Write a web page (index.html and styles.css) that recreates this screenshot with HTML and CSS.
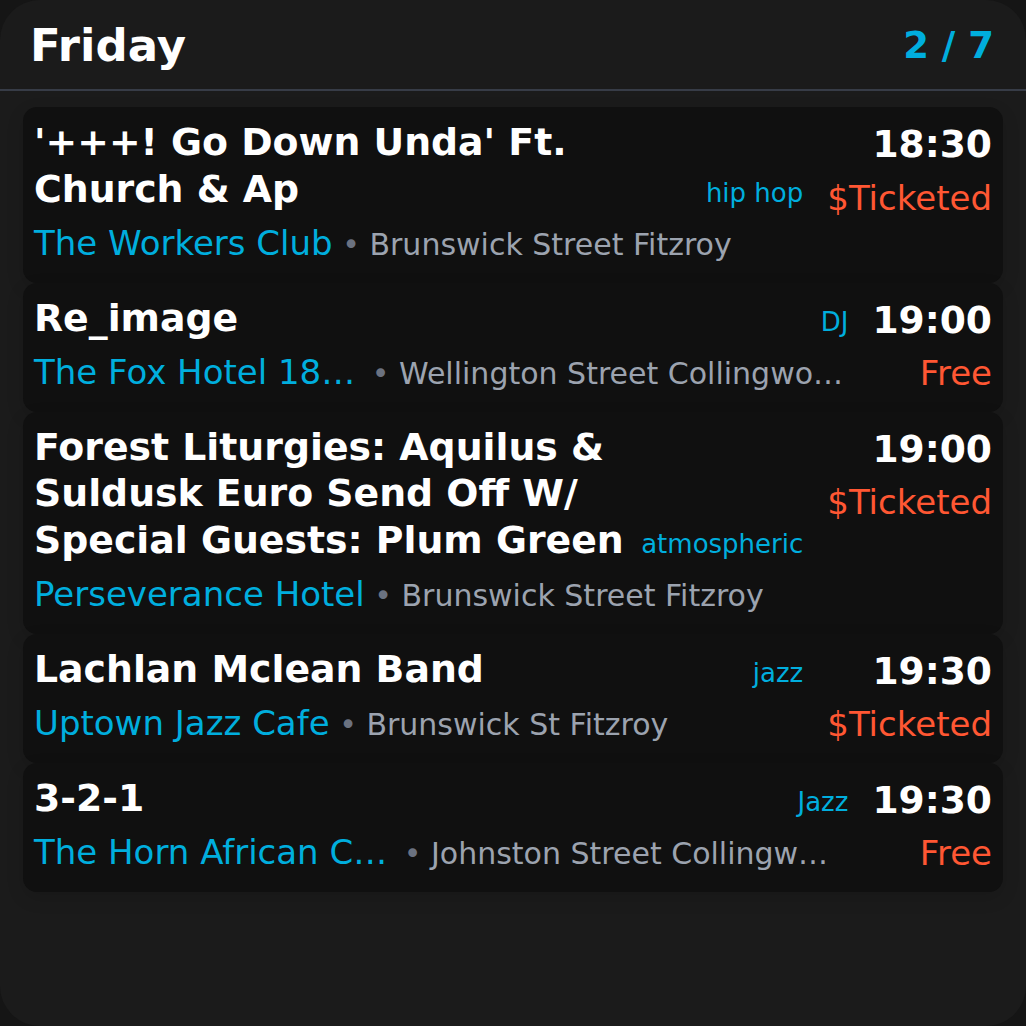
FILE: index.html
```html
<!DOCTYPE html>
<html lang="en">
<head>
<meta charset="utf-8">
<title>Friday gigs</title>
<link rel="stylesheet" href="styles.css">
</head>
<body>
<div class="app">
  <header class="head">
    <h1 class="day">Friday</h1>
    <div class="count">2 / 7</div>
  </header>
  <main class="list">
    <article class="card">
      <div class="main">
        <div class="title-row">
          <h2 class="title">'+++! Go Down Unda' Ft. Church &amp; Ap</h2>
          <span class="genre">hip hop</span>
        </div>
        <div class="venue-row">
          <span class="venue">The Workers Club</span><span class="loc"><span class="dot"> • </span>Brunswick Street Fitzroy</span>
        </div>
      </div>
      <div class="side">
        <div class="time">18:30</div>
        <div class="price">$Ticketed</div>
      </div>
    </article>
    <article class="card">
      <div class="main">
        <div class="title-row">
          <h2 class="title">Re_image</h2>
          <span class="genre">DJ</span>
        </div>
        <div class="venue-row">
          <span class="venue venue-cut">The Fox Hotel 18…</span><span class="loc"><span class="dot"> • </span>Wellington Street Collingwo…</span>
        </div>
      </div>
      <div class="side">
        <div class="time">19:00</div>
        <div class="price">Free</div>
      </div>
    </article>
    <article class="card">
      <div class="main">
        <div class="title-row">
          <h2 class="title">Forest Liturgies: Aquilus &amp; Suldusk Euro Send Off W/ Special Guests: Plum Green</h2>
          <span class="genre">atmospheric</span>
        </div>
        <div class="venue-row">
          <span class="venue">Perseverance Hotel</span><span class="loc"><span class="dot"> • </span>Brunswick Street Fitzroy</span>
        </div>
      </div>
      <div class="side">
        <div class="time">19:00</div>
        <div class="price">$Ticketed</div>
      </div>
    </article>
    <article class="card">
      <div class="main">
        <div class="title-row">
          <h2 class="title">Lachlan Mclean Band</h2>
          <span class="genre">jazz</span>
        </div>
        <div class="venue-row">
          <span class="venue">Uptown Jazz Cafe</span><span class="loc"><span class="dot"> • </span>Brunswick St Fitzroy</span>
        </div>
      </div>
      <div class="side">
        <div class="time">19:30</div>
        <div class="price">$Ticketed</div>
      </div>
    </article>
    <article class="card">
      <div class="main">
        <div class="title-row">
          <h2 class="title">3-2-1</h2>
          <span class="genre">Jazz</span>
        </div>
        <div class="venue-row">
          <span class="venue venue-cut">The Horn African C…</span><span class="loc"><span class="dot"> • </span>Johnston Street Collingw…</span>
        </div>
      </div>
      <div class="side">
        <div class="time">19:30</div>
        <div class="price">Free</div>
      </div>
    </article>
  </main>
</div>
</body>
</html>
```
FILE: styles.css
```css
* { box-sizing: border-box; }

html, body {
  margin: 0;
  padding: 0;
  background: #151515;
}

body {
  font-family: "DejaVu Sans", "Liberation Sans", sans-serif;
  color: #ffffff;
}

.app {
  min-height: 100vh;
  background: #1b1b1b;
  border-radius: 40px;
  overflow: hidden;
}

.head {
  display: flex;
  align-items: center;
  justify-content: space-between;
  padding: 19.5px 32px 17.5px 30px;
  border-bottom: 2px solid #373c47;
}

.day {
  margin: 0;
  font-size: 45px;
  font-weight: 700;
  line-height: 52px;
  color: #ffffff;
}

.count {
  font-size: 37px;
  font-weight: 700;
  line-height: 44px;
  color: #00aede;
}

.list {
  display: flex;
  flex-direction: column;
  padding: 16px 23px;
}

.card {
  display: flex;
  gap: 24px;
  background: #101010;
  border-radius: 14px;
  padding: 12px 11px 17.5px 11px;
  box-shadow: 0 6px 18px rgba(0, 0, 0, 0.12);
}

.main {
  flex: 1;
  min-width: 0;
  display: flex;
  flex-direction: column;
  gap: 11px;
}

.title-row {
  display: flex;
  align-items: last baseline;
  gap: 10px;
}

.title {
  flex: 1;
  min-width: 0;
  margin: 0;
  font-size: 37.8px;
  font-weight: 700;
  line-height: 46.5px;
  color: #ffffff;
}

.genre {
  flex-shrink: 0;
  font-size: 26px;
  line-height: 32px;
  color: #00aede;
}

.venue-row {
  display: flex;
  align-items: baseline;
  white-space: nowrap;
  line-height: 41px;
  min-width: 0;
}

.venue {
  font-size: 34px;
  color: #00aede;
  flex-shrink: 0;
}

.venue-cut {
  margin-right: 7px;
}

.loc {
  font-size: 30px;
  color: #9ca3af;
  overflow: hidden;
  text-overflow: ellipsis;
  white-space: pre;
}

.dot {
  color: #6b7280;
}

.side {
  flex-shrink: 0;
  display: flex;
  flex-direction: column;
  align-items: flex-end;
  gap: 10px;
}

.time {
  padding-top: 2px;
  font-size: 37.6px;
  font-weight: 700;
  line-height: 46.5px;
  color: #ffffff;
}

.price {
  font-size: 34px;
  line-height: 41px;
  color: #ff5733;
}
```
